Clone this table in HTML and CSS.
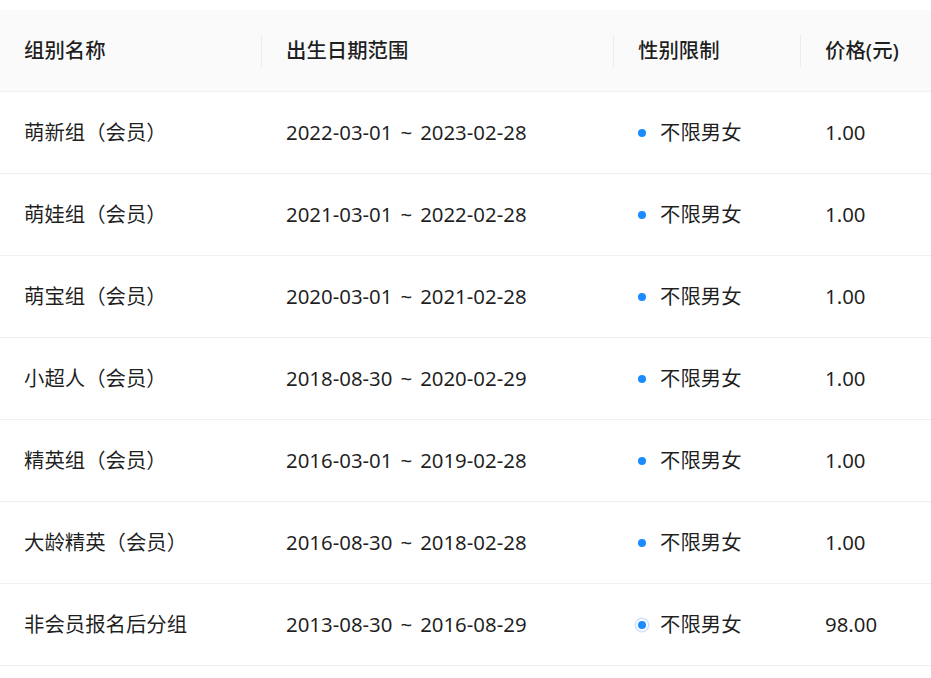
FILE: index.html
```html
<!DOCTYPE html>
<html lang="zh-CN">
<head>
<meta charset="utf-8">
<title>组别</title>
<link rel="stylesheet" href="styles.css">
</head>
<body>
<div class="page">
  <table class="groups">
    <colgroup>
      <col class="c1"><col class="c2"><col class="c3"><col class="c4">
    </colgroup>
    <thead>
      <tr>
        <th class="sep">组别名称</th>
        <th class="sep">出生日期范围</th>
        <th class="sep">性别限制</th>
        <th>价格(元)</th>
      </tr>
    </thead>
    <tbody>
      <tr><td>萌新组（会员）</td><td>2022-03-01<span class="tilde">~</span>2023-02-28</td><td><span class="dot"></span>不限男女</td><td>1.00</td></tr>
      <tr><td>萌娃组（会员）</td><td>2021-03-01<span class="tilde">~</span>2022-02-28</td><td><span class="dot"></span>不限男女</td><td>1.00</td></tr>
      <tr><td>萌宝组（会员）</td><td>2020-03-01<span class="tilde">~</span>2021-02-28</td><td><span class="dot"></span>不限男女</td><td>1.00</td></tr>
      <tr><td>小超人（会员）</td><td>2018-08-30<span class="tilde">~</span>2020-02-29</td><td><span class="dot"></span>不限男女</td><td>1.00</td></tr>
      <tr><td>精英组（会员）</td><td>2016-03-01<span class="tilde">~</span>2019-02-28</td><td><span class="dot"></span>不限男女</td><td>1.00</td></tr>
      <tr><td>大龄精英（会员）</td><td>2016-08-30<span class="tilde">~</span>2018-02-28</td><td><span class="dot"></span>不限男女</td><td>1.00</td></tr>
      <tr><td>非会员报名后分组</td><td>2013-08-30<span class="tilde">~</span>2016-08-29</td><td><span class="dot ring"></span>不限男女</td><td>98.00</td></tr>
    </tbody>
  </table>
</div>
</body>
</html>
```
FILE: styles.css
```css
html, body {
  margin: 0;
  padding: 0;
  background: #ffffff;
}
.page {
  padding-top: 10px;
  font-family: "Noto Sans", "Noto Sans CJK SC", sans-serif;
  font-size: 20.4px;
  color: rgba(0, 0, 0, 0.88);
}
.groups {
  width: 931px;
  border-collapse: collapse;
  table-layout: fixed;
}
.c1 { width: 262px; }
.c2 { width: 352px; }
.c3 { width: 187px; }
.c4 { width: 130px; }
.groups th,
.groups td {
  padding: 24px 24px;
  line-height: 33px;
  text-align: left;
  white-space: nowrap;
  border-bottom: 1px solid #f0f0f0;
}
.groups th {
  background: #fafafa;
  font-weight: 500;
  position: relative;
}
.groups th.sep::after {
  content: "";
  position: absolute;
  right: 0;
  top: 50%;
  width: 1px;
  height: 33px;
  transform: translateY(-50%);
  background: #ececec;
}
.tilde {
  margin: 0 8px;
}
.dot {
  display: inline-block;
  width: 8px;
  height: 8px;
  border-radius: 50%;
  background: #1a8cff;
  margin-right: 14px;
  vertical-align: middle;
  position: relative;
  top: -2px;
}
.dot.ring {
  box-shadow: 0 0 0 2px #ffffff, 0 0 0 3.5px #cfe3ff;
}
```
